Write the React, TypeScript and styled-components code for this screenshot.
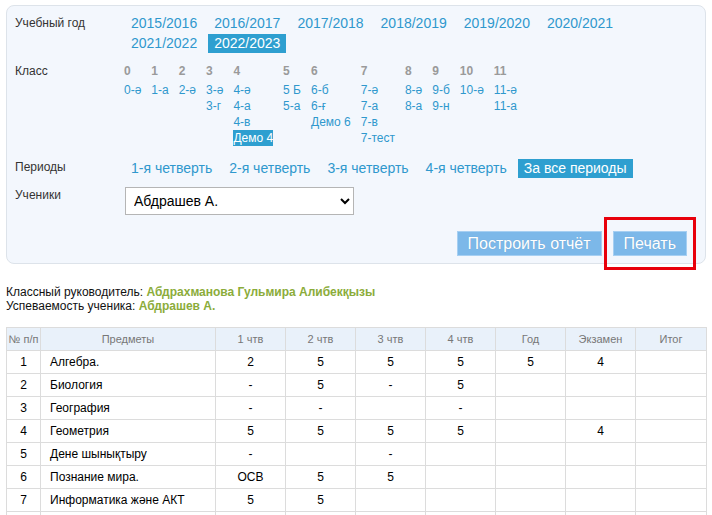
import styled, { createGlobalStyle } from 'styled-components';

const GlobalStyle = createGlobalStyle`
  body {
    margin: 0;
    padding: 5px 6px;
    background: #fff;
    font-family: "Liberation Sans", Arial, sans-serif;
    font-size: 12px;
    color: #000;
  }
`;

const Panel = styled.div`
  background: #f3f7fd;
  border: 1px solid #dde3ea;
  border-radius: 8px;
  padding: 8px 9px 7px 8px;
`;

const FieldRow = styled.div<{ $mt?: number }>`
  display: flex;
  margin-top: ${p => p.$mt ?? 0}px;
`;

const Label = styled.div<{ $pt?: number }>`
  width: 110px;
  flex-shrink: 0;
  font-size: 12px;
  color: #333;
  padding-top: ${p => p.$pt ?? 0}px;
  line-height: 16px;
`;

const LinkList = styled.div<{ $gap: number }>`
  display: flex;
  flex-wrap: wrap;
  column-gap: ${p => p.$gap}px;
  row-gap: 1px;
  flex: 1;
`;

const Pill = styled.span<{ $active?: boolean }>`
  display: inline-block;
  font-size: 14px;
  line-height: 17px;
  padding: 1px 6px;
  color: ${p => (p.$active ? '#fff' : '#2f98cd')};
  background: ${p => (p.$active ? '#2e9fd0' : 'transparent')};
  cursor: pointer;
`;

const Grades = styled.div`
  display: flex;
  gap: 10px;
  margin-left: -1px;
`;

const GradeCol = styled.div`
  display: flex;
  flex-direction: column;
`;

const GradeNum = styled.div`
  font-weight: bold;
  color: #9a9a9a;
  font-size: 12px;
  line-height: 16px;
  margin-bottom: 3px;
`;

const ClassLink = styled.span<{ $active?: boolean }>`
  font-size: 12px;
  line-height: 16px;
  white-space: nowrap;
  color: ${p => (p.$active ? '#fff' : '#2f98cd')};
  background: ${p => (p.$active ? '#2e9fd0' : 'transparent')};
  align-self: flex-start;
  cursor: pointer;
`;

const Select = styled.select`
  width: 229px;
  height: 28px;
  font-family: "Liberation Sans", Arial, sans-serif;
  font-size: 14px;
  padding: 0 4px;
  border: 1px solid #b5b5b5;
  background: #fff;
  color: #000;
`;

const Actions = styled.div`
  display: flex;
  justify-content: flex-end;
  align-items: center;
  gap: 2px;
  margin-top: 16px;
`;

const Button = styled.button<{ $px: number }>`
  height: 25px;
  padding: 0 ${p => p.$px}px;
  background: #7cb8e9;
  border: 1px solid #a6cff2;
  color: #fff;
  font-family: "Liberation Sans", Arial, sans-serif;
  font-size: 16px;
  text-shadow: 0 0 1px rgba(0, 0, 0, 0.15);
  cursor: pointer;
`;

const Highlight = styled.span`
  display: inline-flex;
  border: 3px solid #e8000b;
  padding: 11px 6px;
  margin: -14px 0;
`;

const Info = styled.div`
  margin-top: 21px;
  font-size: 12px;
  line-height: 14px;
  color: #111;

  b {
    color: #8bac3a;
  }
`;

const Table = styled.table`
  margin-top: 14px;
  width: 700px;
  border-collapse: collapse;
  table-layout: fixed;
  font-size: 12px;

  th {
    background: #e9f1fa;
    color: #777;
    font-weight: normal;
    font-size: 11px;
    height: 20px;
    border: 1px solid #dcdcdc;
  }

  td {
    height: 22px;
    border: 1px solid #dcdcdc;
    text-align: center;
    padding: 0;
  }

  td.subj {
    text-align: left;
    padding-left: 9px;
  }
`;

const years = [
  '2015/2016', '2016/2017', '2017/2018', '2018/2019', '2019/2020', '2020/2021',
  '2021/2022', '2022/2023',
];

const grades: { n: string; classes: string[] }[] = [
  { n: '0', classes: ['0-ә'] },
  { n: '1', classes: ['1-а'] },
  { n: '2', classes: ['2-ә'] },
  { n: '3', classes: ['3-ә', '3-г'] },
  { n: '4', classes: ['4-ә', '4-а', '4-в', 'Демо 4'] },
  { n: '5', classes: ['5 Б', '5-а'] },
  { n: '6', classes: ['6-б', '6-ғ', 'Демо 6'] },
  { n: '7', classes: ['7-ә', '7-а', '7-в', '7-тест'] },
  { n: '8', classes: ['8-ә', '8-а'] },
  { n: '9', classes: ['9-б', '9-н'] },
  { n: '10', classes: ['10-ә'] },
  { n: '11', classes: ['11-ә', '11-а'] },
];

const periods = ['1-я четверть', '2-я четверть', '3-я четверть', '4-я четверть', 'За все периоды'];

const rows: [string, string[]][] = [
  ['Алгебра.', ['2', '5', '5', '5', '5', '4', '']],
  ['Биология', ['-', '5', '-', '5', '', '', '']],
  ['География', ['-', '-', '', '-', '', '', '']],
  ['Геометрия', ['5', '5', '5', '5', '', '4', '']],
  ['Дене шынықтыру', ['-', '', '-', '', '', '', '']],
  ['Познание мира.', ['ОСВ', '5', '5', '', '', '', '']],
  ['Информатика және АКТ', ['5', '5', '', '', '', '', '']],
  ['', ['', '', '', '', '', '', '']],
];

export default function App() {
  return (
    <>
      <GlobalStyle />
      <Panel>
        <FieldRow>
          <Label $pt={1}>Учебный год</Label>
          <LinkList $gap={5}>
            {years.map(y => (
              <Pill key={y} $active={y === '2022/2023'}>{y}</Pill>
            ))}
          </LinkList>
        </FieldRow>

        <FieldRow $mt={10}>
          <Label>Класс</Label>
          <Grades>
            {grades.map(g => (
              <GradeCol key={g.n}>
                <GradeNum>{g.n}</GradeNum>
                {g.classes.map(c => (
                  <ClassLink key={c} $active={c === 'Демо 4'}>{c}</ClassLink>
                ))}
              </GradeCol>
            ))}
          </Grades>
        </FieldRow>

        <FieldRow $mt={13}>
          <Label>Периоды</Label>
          <LinkList $gap={5}>
            {periods.map(p => (
              <Pill key={p} $active={p === 'За все периоды'}>{p}</Pill>
            ))}
          </LinkList>
        </FieldRow>

        <FieldRow $mt={9}>
          <Label>Ученики</Label>
          <Select defaultValue="a">
            <option value="a">Абдрашев А.</option>
          </Select>
        </FieldRow>

        <Actions>
          <Button $px={10}>Построить отчёт</Button>
          <Highlight>
            <Button $px={10}>Печать</Button>
          </Highlight>
        </Actions>
      </Panel>

      <Info>
        Классный руководитель: <b>Абдрахманова Гульмира Алибекқызы</b>
        <br />
        Успеваемость ученика: <b>Абдрашев А.</b>
      </Info>

      <Table>
        <colgroup>
          <col style={{ width: 34 }} />
          <col style={{ width: 175 }} />
          <col style={{ width: 70 }} />
          <col style={{ width: 70 }} />
          <col style={{ width: 70 }} />
          <col style={{ width: 70 }} />
          <col style={{ width: 70 }} />
          <col style={{ width: 70 }} />
          <col style={{ width: 71 }} />
        </colgroup>
        <thead>
          <tr>
            <th>№ п/п</th>
            <th>Предметы</th>
            <th>1 чтв</th>
            <th>2 чтв</th>
            <th>3 чтв</th>
            <th>4 чтв</th>
            <th>Год</th>
            <th>Экзамен</th>
            <th>Итог</th>
          </tr>
        </thead>
        <tbody>
          {rows.map(([subject, marks], i) => (
            <tr key={i}>
              <td>{subject ? i + 1 : ''}</td>
              <td className="subj">{subject}</td>
              {marks.map((m, j) => (
                <td key={j}>{m}</td>
              ))}
            </tr>
          ))}
        </tbody>
      </Table>
    </>
  );
}
